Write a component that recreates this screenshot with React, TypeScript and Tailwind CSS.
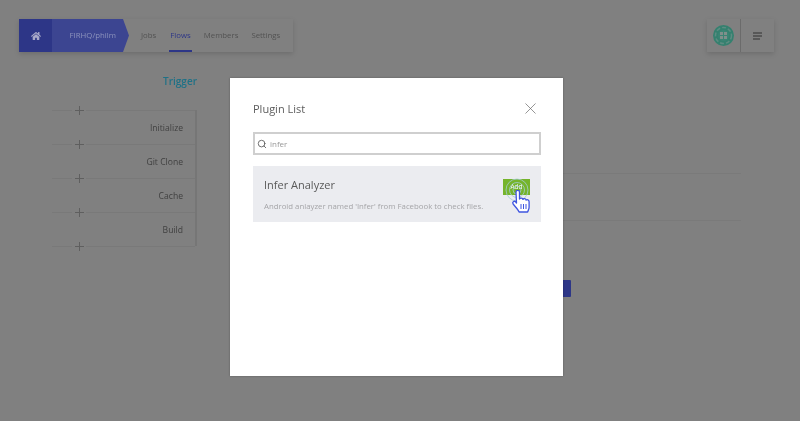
import React from 'react';
import { Search, X } from 'lucide-react';
import { FaHome } from 'react-icons/fa';

const steps = ['Initialize', 'Git Clone', 'Cache', 'Build'];

const PlusRow = () => (
    <div className="relative h-0">
        <div className="border-t border-[#797979]" />
        <div className="absolute left-[20px] top-[-6px] flex h-[13px] w-[14px] items-center justify-center bg-[#808080] text-[#5f5f5f]">
            <svg width="9" height="9" viewBox="0 0 9 9" stroke="currentColor" strokeWidth="1">
                <path d="M4.5 0v9M0 4.5h9" />
            </svg>
        </div>
    </div>
);

const GlobeLogo = () => (
    <svg width="21" height="21" viewBox="0 0 21 21">
        <circle cx="10.5" cy="10.5" r="10.5" fill="#35806f" />
        <circle cx="10.5" cy="10.5" r="8" fill="none" stroke="#5d8c82" strokeWidth="1.5" strokeDasharray="4 2" />
        <circle cx="10.5" cy="10.5" r="5.500" fill="#3b8474" />
        <g fill="#7f8f8b">
            <rect x="7" y="7" width="3" height="3" />
            <rect x="11" y="7" width="3" height="3" />
            <rect x="7" y="11" width="3" height="3" />
            <rect x="11" y="11" width="3" height="3" />
        </g>
    </svg>
);

const Pointer = () => (
    <svg className="absolute left-[3px] top-[2px] overflow-visible" width="32" height="36" viewBox="0 0 32 36">
        <g fill="none" stroke="#a3cbd2" strokeWidth="0.8">
            <circle cx="11" cy="9" r="4" />
            <circle cx="11" cy="9" r="7.5" />
            <circle cx="11" cy="9" r="11" />
        </g>
        <path
            d="M10 11c0-2.200 3.500-2.200 3.500 0v7c.6-1.400 3.200-1.200 3.400.4.6-1.200 3-1 3.200.8.8-1 3-.5 3 1.600v5.500c0 2-1 3-1.500 4.700h-8.500c-.8-2.200-3.800-5.200-6-8-1.300-1.900 1-3.500 2.500-2.200l.9 1.200z"
            fill="#ffffff"
            stroke="#3f55e0"
            strokeWidth="1.3"
            strokeLinejoin="round"
        />
        <path d="M15 23v5M17.500 23v5M20 23v5" stroke="#3f55e0" strokeWidth="1" />
    </svg>
);

const App: React.FC = () => {
    return (
        <div className="relative h-[421px] w-[800px] overflow-hidden bg-[#808080] font-['Open_Sans',sans-serif] blur-[0.35px]">
            <header className="flex items-start justify-between pl-[19px] pr-[26px] pt-[19px]">
                <div className="flex h-[33px] w-[274px] items-stretch shadow-[0_2px_5px_rgba(0,0,0,0.15)]">
                    <div className="flex w-[33px] items-center justify-center bg-[#2d3687] text-[#a9a9c9]">
                        <FaHome size={10} />
                    </div>
                    <div className="flex w-[71px] items-center justify-end bg-[#3c4591] pr-[7px] text-[7.8px] text-[#8d93bd]">
                        FIRHQ/philm
                    </div>
                    <div className="h-[33px] w-[6px] bg-[#3c4591] [clip-path:polygon(0_0,0_100%,100%_50%)]" />
                    <nav className="ml-[12px] flex text-[7.8px] text-[#525252]">
                        <span className="flex items-center">Jobs</span>
                        <span className="ml-[13px] flex items-center border-b-2 border-[#2d3687] px-[1px] pt-[2px] text-[#2d3687]">Flows</span>
                        <span className="ml-[12px] flex items-center">Members</span>
                        <span className="ml-[13px] flex items-center">Settings</span>
                    </nav>
                </div>
                <div className="flex h-[33px] w-[67px] items-stretch shadow-[0_2px_5px_rgba(0,0,0,0.15)]">
                    <div className="flex w-[34px] items-center justify-center border-r border-[#6b6b6b]">
                        <GlobeLogo />
                    </div>
                    <div className="flex flex-1 flex-col items-start justify-center gap-[1px] pl-[12px]">
                        <div className="h-[2px] w-[9px] bg-[#585858]" />
                        <div className="h-[2px] w-[9px] bg-[#585858]" />
                        <div className="h-[2px] w-[7px] bg-[#585858]" />
                    </div>
                </div>
            </header>

            <main className="flex">
                <section className="ml-[52px] w-[145px]">
                    <h3 className="mt-[21px] mb-[21px] text-right text-[10px] font-semibold leading-[16px] text-[#1f7186]">
                        Trigger
                    </h3>
                    <div className="border-r-2 border-[#767676]">
                        <PlusRow />
                        {steps.map((step) => (
                            <div key={step}>
                                <div className="flex h-[34px] items-center justify-end pr-[12px] pt-[2px] text-[8.6px] text-[#3f3f3f]">
                                    {step}
                                </div>
                                <PlusRow />
                            </div>
                        ))}
                    </div>
                </section>
                <section className="ml-[34px] w-[510px]">
                    <div className="mt-[121px] border-t border-[#7a7a7a]" />
                    <div className="mt-[46px] border-t border-[#7a7a7a]" />
                    <button className="ml-[300px] mt-[59px] block h-[17px] w-[40px] rounded-[1px] bg-[#2d3687]" />
                </section>
            </main>

            {/* plugin modal */}
            <div className="absolute left-[230px] top-[78px] h-[298px] w-[333px] bg-white pl-[23px] pr-[22px] shadow-[0_0_2px_rgba(0,0,0,0.3)]">
                <div className="flex items-center justify-between pt-[21px]">
                    <h2 className="text-[11px] leading-[18px] text-[#5c5c5c]">Plugin List</h2>
                    <X size={19} strokeWidth={0.9} className="mr-[1px] text-[#6a6a6a]" />
                </div>
                <div className="mt-[14px] flex h-[23px] items-center gap-[3px] border-2 border-[#cfcfcf] pl-[2px]">
                    <Search size={10} strokeWidth={2} className="text-[#555555]" />
                    <span className="text-[8px] text-[#999999]">infer</span>
                </div>
                <div className="mt-[11px] flex h-[56px] items-start justify-between bg-[#ebecf0] pl-[11px] pr-[11px]">
                    <div>
                        <div className="mt-[10px] text-[11px] leading-[17px] text-[#5a5a5a]">Infer Analyzer</div>
                        <div className="mt-[7px] whitespace-nowrap text-[7.8px] leading-[12px] text-[#a5a5a8]">
                            Android anlayzer named 'Infer' from Facebook to check files.
                        </div>
                    </div>
                    <div className="relative mt-[13px]">
                        <button className="block h-[16px] w-[27px] bg-[#75b42b] text-center text-[6.5px] leading-[16px] text-white">
                            Add
                        </button>
                        <Pointer />
                    </div>
                </div>
            </div>
        </div>
    );
};

export default App;
